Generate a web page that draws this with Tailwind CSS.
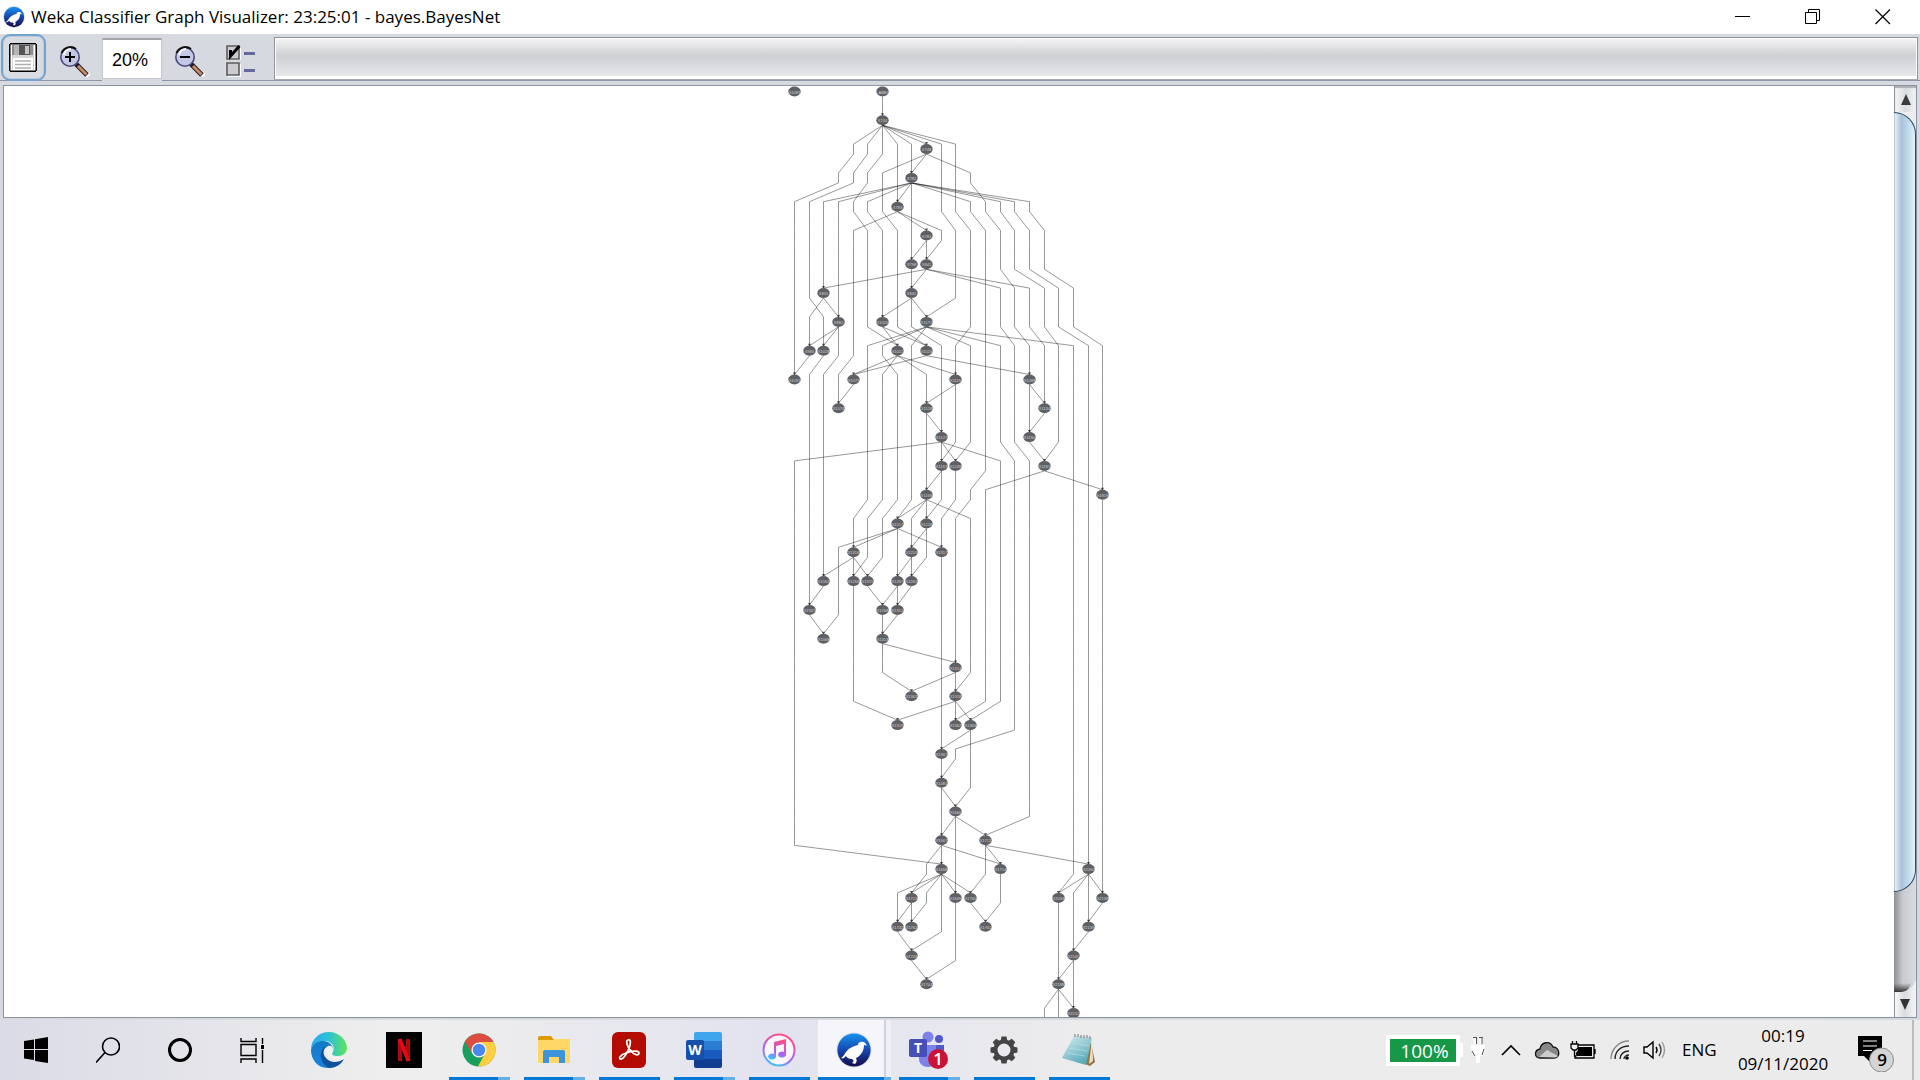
<!DOCTYPE html>
<html lang="en">
<head>
<meta charset="utf-8">
<title>Weka Classifier Graph Visualizer: 23:25:01 - bayes.BayesNet</title>
<script src="https://cdn.jsdelivr.net/npm/@tailwindcss/browser@4"></script>
</head>
<body class="h-screen flex flex-col overflow-hidden bg-white text-black font-['Open_Sans','Noto_Sans',sans-serif]">

<svg class="absolute size-0" aria-hidden="true">
  <defs>
    <linearGradient id="wekaBlue" x1="0" y1="0" x2="0" y2="1"><stop offset="0" stop-color="#1593f0"/><stop offset=".5" stop-color="#1647b0"/><stop offset="1" stop-color="#160a4c"/></linearGradient>
    <symbol id="weka" viewBox="0 0 36 36">
      <circle cx="18" cy="18" r="17.5" fill="#d8dce8"/><circle cx="18" cy="18" r="16.6" fill="url(#wekaBlue)"/>
      <path d="M5 26c2-1 3-3 5-6 3-4 7-6 12-7 0-3 3-4 5-3 2 0 3 2 4 4-1-1-2-1-3-1 0 5-2 9-6 12l-2 1c1 2 1 4-1 6l-3-1c2-1 2-3 0-4-3 0-5-1-6-3-2 2-3 3-5 2z" fill="#fff"/>
    </symbol>
  </defs>
</svg>

<header class="h-[34px] shrink-0 flex items-center pl-[3px] pr-[2px]">
  <svg class="size-[22px] shrink-0"><use href="#weka"/></svg>
  <h1 class="ml-[6px] flex-1 text-[17px] leading-[34px] whitespace-nowrap">Weka Classifier Graph Visualizer: 23:25:01 - bayes.BayesNet</h1>
  <button aria-label="Minimize" class="w-[70px] h-full grid place-items-center"><svg width="16" height="16" fill="none" stroke="#000"><path d="M0 7.500h15"/></svg></button>
  <button aria-label="Restore" class="w-[70px] h-full grid place-items-center"><svg width="16" height="16" fill="none" stroke="#000"><path d="M.5 3.500h11v11H.5zM3.500 3.500v-3h11v11h-3"/></svg></button>
  <button aria-label="Close" class="w-[70px] h-full grid place-items-center"><svg width="16" height="16" fill="none" stroke="#000" stroke-width="1.200"><path d="M.5.5l14.500 14.500M15 .5L.5 15"/></svg></button>
</header>

<nav aria-label="Graph tools" class="h-[51px] shrink-0 bg-[#d6d9df] flex items-start relative pl-px pr-[2px]">
  <div class="absolute inset-x-0 top-[46px] h-px bg-[#8f97a5]"></div>
  <button aria-label="Save graph" class="relative w-[45px] h-[47px] shrink-0 rounded-[9px] border-2 border-[#73a4d1] bg-[#d9dce2] flex pl-[6px] pt-[7px] shadow-[inset_0_0_0_1px_#c3cbd8]">
    <svg width="29" height="30" viewBox="0 0 29 30">
      <path d="M1 1h27v28H1z" fill="#fff"/><path d="M1 0h26v1.500H1zM0 1h1.500v27H0zM1 27.500h26V29H1zM26.500 1H28v27h-1.500z" fill="#000"/><path d="M3 2h22v25H3z" fill="#d4d4d4"/>
      <path d="M3 2h4v10H3z" fill="#8a8a8a"/><path d="M5 2h5v10H5z" fill="#b5b5b5"/><path d="M10 2h11v10H10z" fill="#555"/><path d="M16 3h4v8h-4z" fill="#c4c4c4"/><path d="M21 2h3v10h-3z" fill="#8f8f8f"/>
      <path d="M4 15h20v12H4z" fill="#fff"/><path d="M6 18h16M6 21.500h16M6 25h16" stroke="#b0b0b0" stroke-width="1.500"/>
    </svg>
  </button>
  <button aria-label="Zoom in" class="relative w-[56px] h-[46px] shrink-0 pl-[14px] pt-[8px]">
    <svg width="30" height="31" viewBox="0 0 30 31">
      <path d="M18 20l11 10" stroke="#fff" stroke-width="5"/><path d="M16 18l11 11" stroke="#1f1a2a" stroke-width="5"/><path d="M18 20l8.500 8.500" stroke="#c98a63" stroke-width="3"/>
      <circle cx="10" cy="11" r="9.200" fill="#c5c8e4" stroke="#4b4a7c" stroke-width="1.600"/><path d="M1.500 7A9.500 9.500 0 0 1 16 3" fill="none" stroke="#111" stroke-width="2"/><path d="M4 9a7 7 0 0 1 7-6" fill="none" stroke="#fff" stroke-width="2"/>
      <path d="M5 11h10M10 6v10" stroke="#000" stroke-width="2"/>
    </svg>
  </button>
  <input aria-label="Zoom level" value="20%" class="relative w-[60px] h-[41px] mt-[4px] shrink-0 bg-white pl-[9px] pt-[3px] text-[18px] font-['Liberation_Sans',Arial,sans-serif] border-t-2 border-t-[#a4a5a8] border-x border-b border-x-[#c5c8cd] border-b-[#c5c8cd] shadow-[0_2px_0_#d6d9df]">
  <button aria-label="Zoom out" class="relative w-[57px] h-[46px] shrink-0 pl-[13px] pt-[8px]">
    <svg width="30" height="31" viewBox="0 0 30 31">
      <path d="M18 20l11 10" stroke="#fff" stroke-width="5"/><path d="M16 18l11 11" stroke="#1f1a2a" stroke-width="5"/><path d="M18 20l8.500 8.500" stroke="#c98a63" stroke-width="3"/>
      <circle cx="10" cy="11" r="9.200" fill="#c5c8e4" stroke="#4b4a7c" stroke-width="1.600"/><path d="M1.500 7A9.500 9.500 0 0 1 16 3" fill="none" stroke="#111" stroke-width="2"/><path d="M4 9a7 7 0 0 1 7-6" fill="none" stroke="#fff" stroke-width="2"/>
      <path d="M5 11h10" stroke="#000" stroke-width="2"/>
    </svg>
  </button>
  <button aria-label="Layout options" class="relative w-[55px] h-[46px] shrink-0 pl-[7px] pt-[8px]">
    <svg width="30" height="32" viewBox="0 0 30 32">
      <path d="M2 2h13v13H2zM2 19h13v13H2z" fill="#fff"/><path d="M1 1h12v13H1zM1 18h12v12H1z" fill="#ccc" stroke="#5c5c5c" stroke-width="1.600"/>
      <path d="M4.500 5v6l9-10" fill="none" stroke="#000" stroke-width="3"/><path d="M18 8.500h11M18 25.500h11" stroke="#6666a0" stroke-width="3"/>
    </svg>
  </button>
  <div role="progressbar" aria-label="Layout progress" class="flex-1 h-[43px] mt-[3px] border border-[#8f919b] border-b-[#a6a8b2] p-px bg-white">
    <div class="h-full border-b-2 border-white bg-linear-to-b from-[#f3f3f4] via-[#cfd0d4] via-45% to-[#e6e7eb]"></div>
  </div>
</nav>

<main class="flex-1 min-h-0 bg-[#d6d9df] px-[3px] pb-[2px] flex">
  <div class="flex-1 min-w-0 flex border border-[#8b93a1] bg-white">
    <section aria-label="Bayes network graph" class="flex-1 min-w-0 flex justify-center overflow-hidden">
      <svg id="graph" class="w-[324px] h-full shrink-0 font-['Liberation_Sans',Arial,sans-serif]"></svg>
    </section>
    <aside aria-label="Vertical scroll bar" class="w-[22px] shrink-0 flex flex-col bg-linear-to-r from-[#8d9095] via-[#c9cbd0] via-40% to-[#d9dbe1]">
      <button aria-label="Scroll up" class="h-[26px] shrink-0 relative bg-linear-to-r from-[#f4f5f6] via-[#d9dcdf] to-[#f2f3f5] border-l border-[#8e9197] shadow-[inset_0_2px_1px_#aeb0b4] grid place-items-center">
        <svg width="10" height="11"><path d="M5 0l5 11H0z" fill="#3b3b3b"/></svg>
      </button>
      <div class="flex-1 min-h-0 flex flex-col bg-linear-to-b from-[#eceef0] from-0% via-transparent via-10% to-transparent">
        <div class="h-[780px] rounded-r-[22px] border border-l-0 border-[#2f4a66] bg-linear-to-r from-[#f2f7fa] from-0% via-[#a9c2da] via-35% to-[#dcf2fc] shadow-[inset_1px_0_0_#b9c9d8]"></div>
      </div>
      <button aria-label="Scroll down" class="h-[37px] shrink-0">
        <svg width="22" height="37" viewBox="0 0 22 37">
          <defs><linearGradient id="arrowFace"><stop offset="0" stop-color="#f6f7f8"/><stop offset=".45" stop-color="#d9dcdf"/><stop offset="1" stop-color="#f4f5f7"/></linearGradient>
          <linearGradient id="troughEnd" x1="0" y1="0" x2="0" y2="1"><stop offset="0" stop-color="#444" stop-opacity="0"/><stop offset="1" stop-color="#333"/></linearGradient></defs>
          <path d="M0 3h18L12 12H0z" fill="url(#troughEnd)"/><path d="M1 12h6C15 11 20 6 22 0v37H1z" fill="url(#arrowFace)"/><path d="M.5 12v25" stroke="#8e9197"/><path d="M6 19h10l-5 11z" fill="#333"/>
        </svg>
      </button>
    </aside>
  </div>
</main>

<footer class="h-[60px] shrink-0 flex bg-linear-to-r from-[#dadbe6] from-0% via-[#eeeeee] via-20% to-[#ebebeb]">
  <nav aria-label="Taskbar" class="flex">
    <button aria-label="Start" class="w-[72px] h-full grid place-items-center"><svg width="24" height="26" viewBox="0 0 24 26"><path d="M0 4l10-1.500V12H0zM11 2.300L24 0v12H11zM0 13h10v10L0 21.500zM11 13h13v13l-13-2z"/></svg></button>
    <button aria-label="Search" class="w-[72px] h-full grid place-items-center"><svg width="24" height="26" viewBox="0 0 24 26" fill="none" stroke="#000" stroke-width="1.600"><circle cx="15" cy="9.500" r="8.500"/><path d="M9 15.500L0 25.500"/></svg></button>
    <button aria-label="Cortana" class="w-[72px] h-full grid place-items-center"><svg width="26" height="26"><circle cx="13" cy="13" r="10.500" fill="none" stroke="#000" stroke-width="3"/></svg></button>
    <button aria-label="Task View" class="w-[72px] h-full grid place-items-center"><svg width="25" height="25" viewBox="0 0 25 25" fill="none" stroke="#000" stroke-width="1.400"><path d="M1 6.500h15v11H1zM1 0v3.500h15V0M1 25v-4h15v4M22.500 0v6M22.500 12v13"/><path d="M21 7h3v4h-3z" fill="#000" stroke="none"/></svg></button>
    <button aria-label="Microsoft Edge" class="w-[82px] h-full grid place-items-center">
      <svg width="36" height="36" viewBox="0 0 36 36"><defs><linearGradient id="edgeTop"><stop offset="0" stop-color="#2da8f0"/><stop offset=".5" stop-color="#2cc3d3"/><stop offset="1" stop-color="#62e35b"/></linearGradient><linearGradient id="edgeSide" x2="0" y2="1"><stop offset="0" stop-color="#1579c4"/><stop offset="1" stop-color="#1484e0"/></linearGradient></defs>
      <path d="M0 18C0 7 8 0 18 0c10 0 18 8 18 16 0 5-4 8-9 8-6 0-7-2-5-4 2-4 0-11-8-11C7 9 2 12 0 18z" fill="url(#edgeTop)"/>
      <path d="M0 18C2 11 7 9 12 9c6 0 10 4 10 9-2-5-9-3-10 2-2 6 3 13 10 15C9 39 0 29 0 18z" fill="url(#edgeSide)"/>
      <path d="M14 15c-2 4-2 8 1 11 4 5 12 5 18 1-3 6-9 9-15 9-6-3-9-9-8-15 1-3 2-5 4-6z" fill="#10529b"/><path d="M17 14c4-1 6 2 4 6-1 3 2 5 6 5s6-1 9-1l-1 2c-9 5-20 0-21-6 0-3 1-5 3-6z" fill="#f0f0f0"/></svg>
    </button>
    <button aria-label="Netflix" class="w-[68px] h-full grid place-items-center"><svg width="36" height="36"><path d="M0 0h36v36H0z"/><path d="M12 7h4v22h-4zM20 7h4v22h-4z" fill="#b00710"/><path d="M13.500 7l9 22" stroke="#e50914" stroke-width="4"/></svg></button>
    <div id="running" class="flex pl-[11px] gap-[14px] bg-linear-to-r from-transparent via-[#e2e3ef] to-transparent"></div>
  </nav>
  <div class="ml-auto flex items-center pr-[6px]">
    <div class="flex items-center w-[77px]"><div class="w-[74px] h-[31px] border-[4px] border-white bg-[#179748] text-white text-[19px] leading-[24px] pl-[3px] text-center">100%</div><i class="w-[3px] h-[14px] bg-white"></i></div>
    <svg class="ml-[8px]" width="14" height="26" viewBox="0 0 14 26"><path d="M0 8h14c0 7-2 10-5 12v6H5v-6C2 18 0 15 0 8z" fill="#fff"/><path d="M4 0v7M10 0v7" stroke="#fff" stroke-width="3"/><path d="M2 .5h4M8 .5h4M5.500 1v6M11 1v6M13 12l-2 6M1 14l3 5" stroke="#555" fill="none"/></svg>
    <button aria-label="Show hidden icons" class="ml-[16px]"><svg width="20" height="12" fill="none" stroke="#000" stroke-width="1.600"><path d="M1 11l9-9 9 9"/></svg></button>
    <svg class="ml-[13px]" width="26" height="18" viewBox="0 0 26 18"><path d="M6 17C0 17 0 9 6 8 7 1 16-1 19 6c7 0 8 11 1 11z" fill="#888" stroke="#111" stroke-width="1.300"/><path d="M5 16l8-7 11 6c-1 1-2 1.500-4 1.500z" fill="#ccc"/></svg>
    <svg class="ml-[10px]" width="26" height="18" viewBox="0 0 26 18"><path d="M7 4h17v13H5v-5M25 8v5" fill="none" stroke="#000" stroke-width="1.300"/><path d="M8 6h14v9H6v-3l2-3z"/><path d="M1 3h7v4L6 9H3L1 7zM2.500 0v3M6.500 0v3M4.500 9v6h2" stroke="#000" fill="#eee" stroke-width="1.300"/></svg>
    <svg class="ml-[14px]" width="20" height="20" viewBox="0 0 20 20" fill="none" stroke-width="1.400"><path d="M1 19C1 9 9 1 19 1" stroke="#888"/><path d="M5 19C5 11 11 6 19 6M10 19c0-5 4-8 9-8" stroke="#222"/><path d="M14 19c0-2 2-4 5-4" stroke="#222"/><circle cx="17" cy="18" r="1.800" fill="#000"/></svg>
    <svg class="ml-[13px]" width="24" height="20" viewBox="0 0 24 20" fill="none" stroke="#000" stroke-width="1.400"><path d="M1 7h3l6-5v16l-6-5H1zM13 7q2 3 0 6"/><path d="M16 4q4 6 0 12" stroke="#444"/><path d="M19 2q5 8 0 16" stroke="#999"/></svg>
    <span class="ml-[15px] w-[38px] text-[17px]">ENG</span>
    <time datetime="2020-11-09T00:19" class="ml-[13px] w-[100px] text-center text-[17px] leading-[28px] whitespace-nowrap">00:19<br>09/11/2020</time>
    <button aria-label="9 new notifications" class="relative ml-[25px] w-[36px] h-[36px] mt-[8px]">
      <svg width="36" height="36" viewBox="0 0 36 36"><path d="M0 0h24v20H12v6l-6-6H0z"/><path d="M5 5h14M5 10h14M5 14.500h9" stroke="#fff" stroke-width="1.200"/><circle cx="23.500" cy="24" r="12" fill="#d5d5d5" stroke="#8c8c8c"/></svg>
      <span class="absolute left-[12px] top-[12px] w-[24px] h-[24px] text-center text-[17px] leading-[24px] font-semibold">9</span>
    </button>
    <i class="ml-[18px] w-[2px] h-full bg-[#bcbcbc]"></i>
  </div>
</footer>

<script>
// Labels of the network's nodes, one list of [column, label] per layer.
const nodes = [
  "0 X1083,6 LABEL", "6 X744", "9 X748", "8 X782", "7 X783", "9 X784", "8 X798,9 X841",
  "2 X805,8 X842", "3 X882,6 X1020,9 X1171", "1 X980,2 X1028,7 X1022,9 X1026",
  "0 X1031,4 X1073,11 X1119,16 X1088", "3 X1074,9 X1128,17 X1134", "10 X1127,16 X1180",
  "10 X1167,11 X1248,17 X1181", "9 X1168,21 X1819", "7 X1217,9 X1218", "4 X1316,8 X1219,10 X1317",
  "2 X1562,4 X1266,5 X1315,7 X1267,8 X1262", "1 X1567,6 X1268,7 X1312", "2 X1568,6 X1313",
  "11 X1314", "8 X1361,11 X1318", "7 X1319,11 X1362,12 X1366", "10 X1367", "10 X1481", "11 X1666",
  "10 X1667,13 X1712", "10 X1668,14 X1714,20 X2090", "8 X1713,11 X1669,12 X1760,18 X2094,21 X2138",
  "7 X1742,8 X1762,13 X1761,20 X2139", "8 X1743,19 X2140", "9 X1744,18 X2188", "19 X2212"
].map(row => row.split(",").map(s => s.split(" ")));

// Links between neighbouring layers: "a>b" joins columns, "a" or "a-b" runs straight down.
const links = [
  "6", "6>4 6>5 6 6>7 6>8 6>9 6>10 6>11",
  "4>3 5>4 6>5 7 8 9>8 9>6 9>12 10 11",
  "3>0 4>1 5>4 6 7 8>2 8>3 8>5 8>7 8 8>12 8>14 8>15 8>16 12>13 10 11",
  "0-3 4>5 5>6 6>7 7>4 7>9 7>10 8 10>11 11>12 12>13 13>14 14>15 15>16 16>17",
  "0-8 9>8 9 10>9 11-17",
  "0-8 9>8 9>2 9>14 9>16 11-13 14>15 15>17 16>18 17>19",
  "0 1>2 2>1 2>3 3-7 8>6 8 8>9 11>9 12-19",
  "0-4 3>1 3>2 5>7 6>7 6>9 7>9 8>10 9>5 9>6 9>8 9>12 9>14 9>19 12>11 13 14>15 15>16 16>17 17>18 18>20 19>21",
  "0 1>0 2>1 3>2 4>3 5 6>7 7>6 7>4 7>9 7>11 8 9>4 9>16 10-21",
  "1-3 4>3 5-10 11>9 11-21 16>17",
  "1 2 5-9 9>10 10-16 17>16 18-21",
  "1 2 5-9 10>0 10 10>11 10>14 11>10 12>11 13 14>15 15>16 16>17 18>17 19-21",
  "0-2 5-9 10>9 10 11 13>12 14-16 17>13 17>21 19-21",
  "0-2 5>4 6>5 7>6 8>7 9>7 9>8 9 9>12 10>9 11>10 12>11 13-16 19-21",
  "0-2 4-6 7>3 7>4 7 7>10 8 9>8 9-16 19-21",
  "0-4 4>2 4>5 5>4 6>5 7 8>7 8 9>8 10-16 19-21",
  "0 1 2>1 3 4 5>6 7>6 7 8>7 10-16 19-21",
  "0 1>2 3>2 4 6 7>6 10-16 19-21",
  "0 4 6 6>11 10-16 19-21",
  "0 4 6>8 10 11>8 11 12>11 13-16 19-21",
  "0 4>7 10 11>7 11 11>12 13>11 14>12 15 16 19-21",
  "0 10 12>10 12 15>11 16 19-21",
  "0 10 11>10 12 16 19-21",
  "0 10 10>11 12>11 16 19-21",
  "0 10 11>10 11 11>13 16>13 19-21",
  "0>10 10>9 10 10>14 11 13 13>14 13>20 19-21",
  "9>8 10>7 10>8 10>9 10 10>11 10>12 11 13>12 14 19>18 20>18 20>19 20 20>21 21",
  "7 8>7 8 9>8 10 11 12>13 14>13 18-20 21>20",
  "7>8 10>8 11 18 19 20>19",
  "8>9 11>9 18 19>18 19",
  "18>17 18 18>19 19"
];

const X = c => Math.floor(7.35 + 14.69 * c) + .5;
const Y = r => 5.5 + 28.8 * r;
let lines = "", tips = "", dots = "";
const isNode = (r, c) => nodes[r].some(n => +n[0] === c);
const bends = new Set();
links.forEach((row, r) => row.split(" ").forEach(item => {
  let pairs = [];
  if (item.includes(">")) pairs.push(item.split(">").map(Number));
  else { const [a, b = a] = item.split("-").map(Number); for (let c = a; c <= b; c++) pairs.push([c, c]); }
  for (const [a, b] of pairs) {
    lines += `M${X(a)} ${Y(r) + 5}L${X(b)} ${Y(r + 1) - 5}`;
    if (isNode(r + 1, b)) tips += `M${X(b) - 1.5} ${Y(r + 1) - 7}h3l-1.500 3z`;
    else bends.add((r + 1) + " " + b);
  }
}));
bends.forEach(k => { const [r, c] = k.split(" ").map(Number); lines += `M${X(c)} ${Y(r) - 5}V${Y(r) + 5}`; });
nodes.forEach((row, r) => row.forEach(([c, label]) => {
  dots += `<ellipse cx="${X(+c)}" cy="${Y(r)}" rx="6.200" ry="5" fill="#5f6065"/><text x="${X(+c)}" y="${Y(r) + 2}" text-anchor="middle" font-size="4" fill="#d2d2d2">${label}</text>`;
}));
document.getElementById("graph").innerHTML = `<path d="${lines}" fill="none" stroke="#000" stroke-opacity=".45" stroke-width=".9"/><path d="${tips}" fill="#222" fill-opacity=".8"/>${dots}`;

// Running applications; "many" marks those with more than one window.
const apps = [
  ["Google Chrome", true, `<svg width="34" height="34" viewBox="0 0 34 34"><circle cx="17" cy="17" r="16.500" fill="#19a05e"/><path d="M17 17L3 8.500A16.500 16.500 0 0 1 31.500 9z" fill="#dc4e41"/><path d="M17 17V9h14.500A16.500 16.500 0 0 1 16 33.500l7-13z" fill="#ffcd40"/><path d="M3 8.500l7 12 7-11.500z" fill="#dc4e41"/><circle cx="17" cy="17" r="7.600" fill="#f4f4f4"/><circle cx="17" cy="17" r="6.200" fill="#4a87ee"/></svg>`],
  ["File Explorer", true, `<svg width="32" height="28" viewBox="0 0 32 28"><path d="M0 2q0-2 2-2h11l3 4H0z" fill="#dc9c00"/><path d="M0 4h15l2-1h15v23q0 1-1 1H1q-1 0-1-1z" fill="#ffd766"/><path d="M5 27V16q0-2 2-2h18q2 0 2 2v11h-6v-6H11v6z" fill="#3c94dc"/></svg>`],
  ["Adobe Acrobat", false, `<svg width="34" height="36" viewBox="0 0 34 36"><rect width="34" height="36" rx="6" fill="#b30b00"/><path d="M16 8c2-1 3 1 2 5-1 5-6 14-9 14s-1-4 5-6c5-2 13-3 13 0s-5 2-8-2c-3-3-6-10-3-11z" fill="none" stroke="#fff" stroke-width="1.800"/></svg>`],
  ["Word", true, `<svg width="36" height="36" viewBox="0 0 36 36"><path d="M8 2q0-2 2-2h24q2 0 2 2v7H8z" fill="#41a5ee"/><path d="M8 9h28v9H8z" fill="#2b7cd3"/><path d="M8 18h28v9H8z" fill="#185abd"/><path d="M8 27h28v7q0 2-2 2H10q-2 0-2-2z" fill="#103f91"/><rect y="8" width="18" height="20" rx="2" fill="#1650ad"/><text x="9" y="23" text-anchor="middle" font-size="14" font-weight="700" fill="#fff">W</text></svg>`],
  ["iTunes", false, `<svg width="34" height="36" viewBox="0 0 34 34"><defs><linearGradient id="tunes" x1=".7" y1="0" x2=".3" y2="1"><stop offset="0" stop-color="#ff4f7b"/><stop offset=".6" stop-color="#b55cf0"/><stop offset="1" stop-color="#3cc6fa"/></linearGradient></defs><circle cx="17" cy="17" r="15.500" fill="#fbf6fc" stroke="url(#tunes)" stroke-width="2"/><path d="M12 9l12-3v16a4 3 0 1 1-2-3v-8l-8 2v11a4 3 0 1 1-2-3z" fill="url(#tunes)"/></svg>`],
  ["Weka", true, `<svg width="36" height="36"><use href="#weka"/></svg>`],
  ["Microsoft Teams", true, `<svg width="40" height="38" viewBox="0 0 40 38"><circle cx="19" cy="6" r="5.500" fill="#7b83eb"/><circle cx="30" cy="8" r="4" fill="#5059c9"/><path d="M23 14h12v8c0 6-4 9-8 9z" fill="#5059c9"/><path d="M10 14h17v14c0 5-4 8-8 8-6 0-9-4-9-8z" fill="#7b83eb"/><rect y="8" width="18" height="18" rx="2" fill="#464eb8"/><text x="9" y="22" text-anchor="middle" font-size="14" font-weight="700" fill="#fff">T</text><circle cx="29" cy="28" r="10" fill="#cb1338"/><text x="29" y="34" text-anchor="middle" font-size="17" font-weight="600" fill="#fff">1</text></svg>`],
  ["Settings", false, `<svg width="28" height="28" viewBox="-14 -14 28 28"><circle r="8.500" fill="none" stroke="#444" stroke-width="4"/><path d="M-2.500-13.500h5l1 5h-7zM-2.500 13.500h5l1-5h-7z" fill="#444"/><path d="M-2.500-13.500h5l1 5h-7zM-2.500 13.500h5l1-5h-7z" fill="#444" transform="rotate(45)"/><path d="M-2.500-13.500h5l1 5h-7zM-2.500 13.500h5l1-5h-7z" fill="#444" transform="rotate(90)"/><path d="M-2.500-13.500h5l1 5h-7zM-2.500 13.500h5l1-5h-7z" fill="#444" transform="rotate(135)"/></svg>`],
  ["Notepad", false, `<svg width="34" height="34" viewBox="0 0 34 34"><defs><linearGradient id="pad" x1="0" y1="0" x2=".6" y2="1"><stop offset="0" stop-color="#d9eff3"/><stop offset="1" stop-color="#58a9b8"/></linearGradient></defs><path d="M28 5l5 24-5 4-5-2z" fill="#9a7440"/><path d="M30 6l1 22-4 3z" fill="#e8e0c8"/><path d="M12 3l18 2-6 27L0 25z" fill="url(#pad)"/><path d="M9 10l18 3M7 15l18 3M5 20l18 3" stroke="#b9e2e8" stroke-width=".6"/><path d="M13 1v3M16 1v3M19 2v3M22 2v3M25 2v3M28 3v3" stroke="#777"/></svg>`]
];
document.getElementById("running").innerHTML = apps.map(([name, many, icon]) => {
  const active = name === "Weka";
  return `<button aria-label="${name}" class="relative h-full grid place-items-center w-[61px] pr-[2px]">
    ${active ? '<span class="absolute -left-[6px] top-0 h-full w-[66px] bg-[#f5f5fa]"></span><span class="absolute left-[60px] top-0 h-full w-[7px] bg-[#efeff6] border-l-2 border-[#cfd0da]"></span>' : ''}
    <span class="relative">${icon}</span>
    <span class="absolute bottom-0 h-[3px] flex ${active ? '-left-[6px] w-[73px]' : 'left-0 w-full'}"><i class="flex-1 bg-[#0078d7]"></i>${many ? `<i class="${active ? 'w-[7px]' : 'w-[12px]'} bg-[#66aee7]"></i>` : ''}</span>
  </button>`;
}).join("");
</script>
</body>
</html>
